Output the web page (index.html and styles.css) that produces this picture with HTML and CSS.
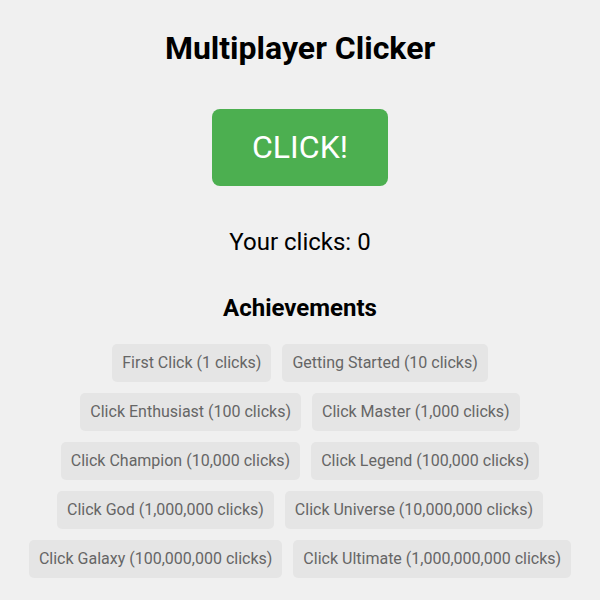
FILE: index.html
```html
<!DOCTYPE html>
<html>
<head>
<meta charset="utf-8">
<link rel="stylesheet" href="styles.css">
</head>
<body>
<div class="app">
  <h1 class="title">Multiplayer Clicker</h1>
  <button class="click-btn">CLICK!</button>
  <div class="count">Your clicks: 0</div>
  <h2 class="ach-title">Achievements</h2>
  <div class="ach-list">
    <span class="badge">First Click (1 clicks)</span>
    <span class="badge">Getting Started (10 clicks)</span>
    <span class="badge">Click Enthusiast (100 clicks)</span>
    <span class="badge">Click Master (1,000 clicks)</span>
    <span class="badge">Click Champion (10,000 clicks)</span>
    <span class="badge">Click Legend (100,000 clicks)</span>
    <span class="badge">Click God (1,000,000 clicks)</span>
    <span class="badge">Click Universe (10,000,000 clicks)</span>
    <span class="badge">Click Galaxy (100,000,000 clicks)</span>
    <span class="badge">Click Ultimate (1,000,000,000 clicks)</span>
  </div>
</div>
</body>
</html>
```
FILE: styles.css
```css
html, body {
  margin: 0;
  background: #f0f0f0;
}
body {
  padding: 8px;
  font-family: Roboto, "Liberation Sans", sans-serif;
  color: #000;
}
.app {
  display: flex;
  flex-direction: column;
  align-items: center;
  text-align: center;
}
.title {
  font-size: 32px;
  font-weight: 700;
  margin: 22px 0 0;
  line-height: 36px;
}
.click-btn {
  margin-top: 43px;
  font-family: inherit;
  font-size: 32px;
  line-height: 37px;
  padding: 20px 40px;
  background: #4caf50;
  color: #fff;
  border: none;
  border-radius: 8px;
}
.count {
  margin-top: 42px;
  font-size: 24px;
  line-height: 28px;
}
.ach-title {
  font-size: 24px;
  font-weight: 700;
  margin: 38px 0 0;
  line-height: 28px;
}
.ach-list {
  margin-top: 22px;
  display: flex;
  flex-wrap: wrap;
  justify-content: center;
  gap: 11px;
}
.badge {
  background: #e5e5e5;
  color: #666;
  font-size: 16px;
  line-height: 20px;
  padding: 9px 10px;
  border-radius: 5px;
}
```
